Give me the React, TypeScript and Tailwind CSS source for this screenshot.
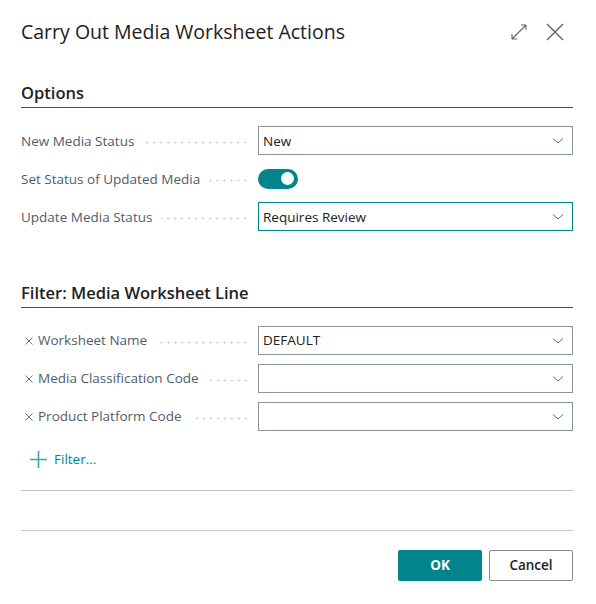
import React from "react";

const font = { fontFamily: '"Open Sans", "Noto Sans", sans-serif' };

function Chevron() {
    return (
        <svg width="12" height="8" viewBox="0 0 12 8" className="text-[#5f6b7a]">
            <path d="M1 1.5 L6 6 L11 1.5" fill="none" stroke="currentColor" strokeWidth="1" />
        </svg>
    );
}

function Dots() {
    return (
        <div className="flex-1 ml-[9px] mr-[9px] mt-[4px] h-[3px] bg-[radial-gradient(circle,#c4c4c4_0.9px,transparent_1.1px)] bg-[length:7px_3px] bg-repeat-x bg-right" />
    );
}

function Label({ text, filter }: { text: string; filter?: boolean }) {
    return (
        <div className="w-[237px] flex items-center text-[13.5px] text-[#505c6d]">
            {filter && (
                <svg width="8" height="8" viewBox="0 0 8 8" className="ml-[4px] mr-[5px] text-[#6b7280]">
                    <path d="M0.5 0.5 L7.5 7.5 M7.5 0.5 L0.5 7.5" fill="none" stroke="currentColor" strokeWidth="1" />
                </svg>
            )}
            <span className="whitespace-nowrap">{text}</span>
            <Dots />
        </div>
    );
}

function Select({ value, focused }: { value: string; focused?: boolean }) {
    return (
        <div
            className={
                "flex-1 h-[29px] flex items-center justify-between pl-[4px] pr-[8px] text-[13.5px] text-[#212121] bg-white border " +
                (focused ? "border-[#00858a]" : "border-[#8a949e]")
            }
        >
            <span>{value}</span>
            <Chevron />
        </div>
    );
}

function Row({ children }: { children: React.ReactNode }) {
    return <div className="flex items-center h-[38px]">{children}</div>;
}

export default function App() {
    return (
        <div className="w-[596px] h-[604px] bg-white flex flex-col pl-[21px] pr-[23px]" style={font}>
            <div className="flex items-center justify-between h-[62px] pt-[1px]">
                <h1 className="text-[19.5px] text-[#212121]">Carry Out Media Worksheet Actions</h1>
                <div className="flex items-center gap-[19px] mr-[9px]">
                    <svg width="16" height="16" viewBox="0 0 16 16" className="text-[#616161]">
                        <path d="M1 15 L15 1 M1 15 L1 10 M1 15 L6 15 M15 1 L10 1 M15 1 L15 6" fill="none" stroke="currentColor" strokeWidth="1.1" />
                    </svg>
                    <svg width="18" height="18" viewBox="0 0 18 18" className="text-[#616161]">
                        <path d="M1 1 L17 17 M17 1 L1 17" fill="none" stroke="currentColor" strokeWidth="1.4" />
                    </svg>
                </div>
            </div>

            <div className="mt-[19px] border-b border-[#505050] pb-[1px]">
                <h2 className="text-[16.5px] font-semibold text-[#212121]">Options</h2>
            </div>
            <div className="mt-[14px]">
                <Row>
                    <Label text="New Media Status" />
                    <Select value="New" />
                </Row>
                <Row>
                    <Label text="Set Status of Updated Media" />
                    <div className="w-[40px] h-[20px] rounded-full bg-[#00858a] flex items-center justify-end pr-[4px]">
                        <div className="w-[13px] h-[13px] rounded-full bg-white" />
                    </div>
                </Row>
                <Row>
                    <Label text="Update Media Status" />
                    <Select value="Requires Review" focused />
                </Row>
            </div>

            <div className="mt-[45px] border-b border-[#505050] pb-[1px]">
                <h2 className="text-[16.5px] font-semibold text-[#212121]">Filter: Media Worksheet Line</h2>
            </div>
            <div className="mt-[14px]">
                <Row>
                    <Label text="Worksheet Name" filter />
                    <Select value="DEFAULT" />
                </Row>
                <Row>
                    <Label text="Media Classification Code" filter />
                    <Select value="" />
                </Row>
                <Row>
                    <Label text="Product Platform Code" filter />
                    <Select value="" />
                </Row>
            </div>
            <div className="flex items-center mt-[14px] ml-[9px] h-[20px] text-[13.5px] text-[#00858a]">
                <svg width="17" height="17" viewBox="0 0 17 17" className="mr-[7px] text-[#3aa5a5]">
                    <path d="M8.5 0 V17 M0 8.5 H17" fill="none" stroke="currentColor" strokeWidth="1.6" />
                </svg>
                Filter...
            </div>

            <div className="mt-[20px] border-b border-[#bfc4c8]" />
            <div className="mt-[39px] border-b border-[#c8c8c8]" />

            <div className="flex justify-end gap-[7px] mt-[19px]">
                <button className="w-[84px] h-[31px] rounded-[2px] bg-[#00858a] text-white text-[13.5px] font-bold">OK</button>
                <button className="w-[84px] h-[31px] rounded-[2px] border border-[#8a8a8a] bg-white text-[#212121] text-[13.5px] font-semibold">
                    Cancel
                </button>
            </div>
        </div>
    );
}
